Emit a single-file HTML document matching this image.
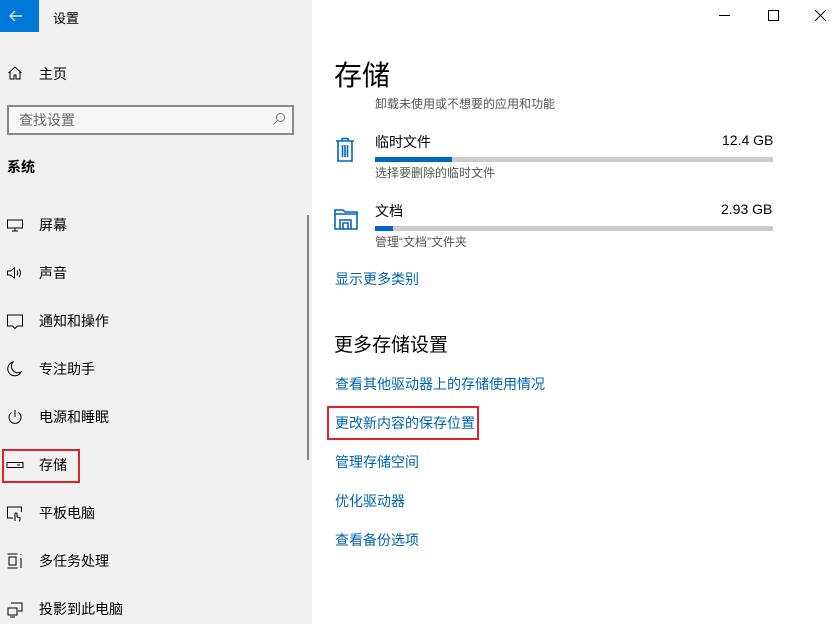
<!DOCTYPE html>
<html><head><meta charset="utf-8">
<style>
*{margin:0;padding:0;box-sizing:border-box}
html,body{width:836px;height:624px;overflow:hidden}
body{background:#fff;font-family:"Liberation Sans","Noto Sans CJK SC",sans-serif;color:#000;position:relative}
.left{position:absolute;left:0;top:0;width:312px;height:624px;background:#f1f1f1}
.abs{position:absolute;white-space:nowrap}
.nav{position:absolute;left:0;width:300px;font-size:14px;height:20px;line-height:20px;white-space:nowrap}
.nav .ic{position:absolute;left:6px;top:1px;width:18px;height:18px}
.nav .t{position:absolute;left:39px;top:0;white-space:nowrap}
.link{position:absolute;left:335px;font-size:14px;color:#0063b1;white-space:nowrap}
.bar{position:absolute;left:375px;width:398px;height:5px;background:#ccc}
.bar i{display:block;height:5px;background:#0067c0}
</style></head><body>
<div class="left"></div>
<div class="abs" style="left:0;top:0;width:39px;height:32px;background:#0078d7"></div>
<svg class="abs" style="left:8px;top:8px" width="16" height="16" viewBox="0 0 16 16"><path d="M14 8H2M7 3L2 8l5 5" fill="none" stroke="#fff" stroke-width="1.2"/></svg>
<div class="abs" style="left:53px;top:8px;font-size:13px">设置</div>

<svg class="abs" style="left:7px;top:65px" width="16" height="16" viewBox="0 0 16 16"><path d="M1.5 8L8 2l6.5 6M3 7v7h4v-4h2v4h4V7" fill="none" stroke="#000" stroke-width="1"/></svg>
<div class="abs" style="left:39px;top:64px;font-size:14px">主页</div>

<div class="abs" style="left:7px;top:105px;width:287px;height:30px;border:2px solid #888;background:#f7f7f7"></div>
<div class="abs" style="left:19px;top:110px;font-size:14px;color:#666">查找设置</div>
<svg class="abs" style="left:272px;top:112px" width="14" height="14" viewBox="0 0 14 14"><circle cx="8.5" cy="5.5" r="4" fill="none" stroke="#777"/><path d="M5.6 8.4L1.5 12.5" stroke="#777"/></svg>

<div class="abs" style="left:7px;top:157px;font-size:14px;font-weight:bold">系统</div>

<div class="abs" style="left:307px;top:215px;width:2px;height:245px;background:#888"></div>

<div class="nav" style="top:215px"><svg class="ic" viewBox="0 0 18 18"><path d="M1.5 4h15v8h-15zM9 12v3M6 15h6" fill="none" stroke="#000"/></svg><span class="t">屏幕</span></div>
<div class="nav" style="top:263px"><svg class="ic" viewBox="0 0 18 18"><path d="M1.5 7h3l4-3v10l-4-3h-3z" fill="none" stroke="#000"/><path d="M11 6.5q1.5 2.5 0 5M13 5q3 4 0 8" fill="none" stroke="#000"/></svg><span class="t">声音</span></div>
<div class="nav" style="top:311px"><svg class="ic" viewBox="0 0 18 18"><path d="M1.5 3h15v11h-5l-2.5 2.5L6.5 14h-5z" fill="none" stroke="#000"/></svg><span class="t">通知和操作</span></div>
<div class="nav" style="top:359px"><svg class="ic" viewBox="0 0 18 18"><path d="M7 2a7 7 0 1 0 8 10A6.5 6.5 0 0 1 7 2z" fill="none" stroke="#000"/></svg><span class="t">专注助手</span></div>
<div class="nav" style="top:407px"><svg class="ic" viewBox="0 0 18 18"><path d="M9 2v7M5.5 4.5a6 6 0 1 0 7 0" fill="none" stroke="#000"/></svg><span class="t">电源和睡眠</span></div>
<div class="nav" style="top:455px"><svg class="ic" viewBox="0 0 18 18"><path d="M1 6.5h16v5H1zM11 9h3" fill="none" stroke="#000"/></svg><span class="t">存储</span></div>
<div class="abs" style="left:2px;top:449px;width:78px;height:34px;border:2px solid #e0202a"></div>
<div class="nav" style="top:503px"><svg class="ic" viewBox="0 0 18 18"><path d="M7 14H1.5V3h14v5M9 17v-7a1 1 0 0 1 2 0v3l3 .5v2.5l-1 1.5" fill="none" stroke="#000"/></svg><span class="t">平板电脑</span></div>
<div class="nav" style="top:551px"><svg class="ic" viewBox="0 0 18 18"><path d="M1.5 2h10M1.5 16h10M3 5h7v8H3zM15 2v1M15 6v10" fill="none" stroke="#000"/></svg><span class="t">多任务处理</span></div>
<div class="nav" style="top:599px"><svg class="ic" viewBox="0 0 18 18"><path d="M5 3h11v8h-4M2 8h9v7H2zM4 17h5" fill="none" stroke="#000"/></svg><span class="t">投影到此电脑</span></div>

<div class="abs" style="left:719px;top:15px;width:11px;height:1px;background:#000"></div>
<div class="abs" style="left:768px;top:10px;width:11px;height:11px;border:1px solid #000"></div>
<svg class="abs" style="left:815px;top:10px" width="11" height="11" viewBox="0 0 11 11"><path d="M0 0L11 11M11 0L0 11" stroke="#000"/></svg>

<div class="abs" style="left:334px;top:54px;font-size:28px">存储</div>
<div class="abs" style="left:375px;top:95px;font-size:12px;color:#555">卸载未使用或不想要的应用和功能</div>

<svg class="abs" style="left:335px;top:137px" width="20" height="26" viewBox="0 0 20 26"><path d="M1 4h18M7 4V1.5h6V4M3 4v20h14V4M7.5 8v12M10 8v12M12.5 8v12" fill="none" stroke="#0067c0" stroke-width="1.6"/></svg>
<div class="abs" style="left:375px;top:132px;font-size:14px">临时文件</div>
<div class="abs" style="left:722px;top:132px;font-size:14px">12.4 GB</div>
<div class="bar" style="top:157px"><i style="width:77px"></i></div>
<div class="abs" style="left:375px;top:164px;font-size:12px;color:#555">选择要删除的临时文件</div>

<svg class="abs" style="left:334px;top:207px" width="24" height="24" viewBox="0 0 24 24"><path d="M1 3h8l2 2h12v17H1zM1 7h22M6 22v-9h11v9M9 22v-6h5v6" fill="none" stroke="#0067c0" stroke-width="1.6"/></svg>
<div class="abs" style="left:375px;top:201px;font-size:14px">文档</div>
<div class="abs" style="left:721px;top:201px;font-size:14px">2.93 GB</div>
<div class="bar" style="top:226px"><i style="width:18px"></i></div>
<div class="abs" style="left:375px;top:233px;font-size:12px;color:#555">管理“文档”文件夹</div>

<div class="link" style="top:269px">显示更多类别</div>
<div class="abs" style="left:334px;top:330px;font-size:19px">更多存储设置</div>
<div class="link" style="top:374px">查看其他驱动器上的存储使用情况</div>
<div class="link" style="top:413px">更改新内容的保存位置</div>
<div class="abs" style="left:327px;top:406px;width:152px;height:34px;border:2px solid #e0202a"></div>
<div class="link" style="top:452px">管理存储空间</div>
<div class="link" style="top:491px">优化驱动器</div>
<div class="link" style="top:530px">查看备份选项</div>
</body></html>
